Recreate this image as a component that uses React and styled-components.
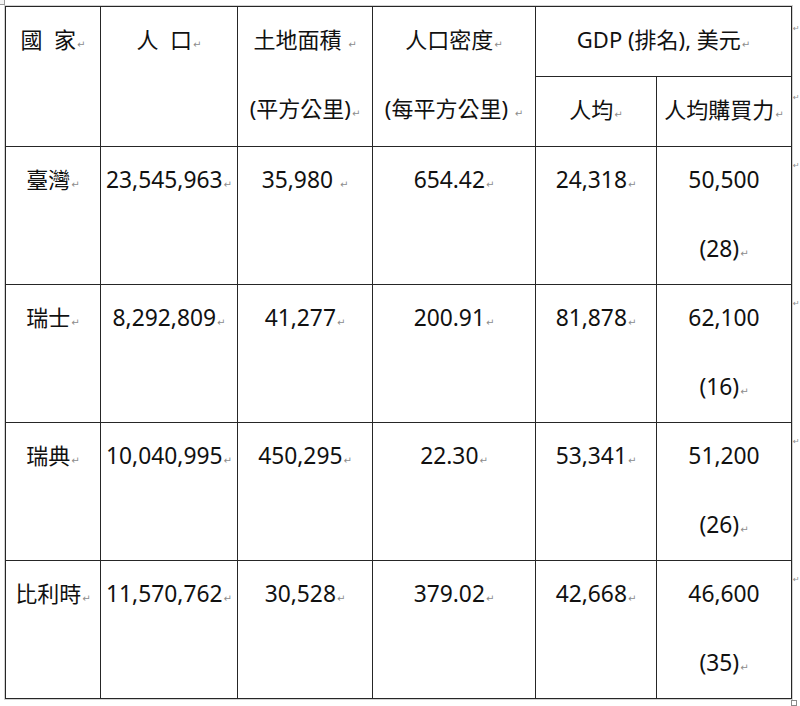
import React from "react";
import styled, { createGlobalStyle } from "styled-components";

const GlobalStyle = createGlobalStyle`
  html, body {
    margin: 0;
    padding: 0;
    background: #ffffff;
  }
  body {
    font-family: "Noto Sans", "Noto Sans CJK TC", sans-serif;
    color: #111;
  }
`;

const Page = styled.div`
  position: relative;
  display: flex;
  align-items: flex-start;
  padding: 6px 0 0 5px;
  width: 800px;
  height: 706px;
  box-sizing: border-box;
  overflow: hidden;
`;

const MoveHandle = styled.div`
  position: absolute;
  left: -1px;
  top: -1px;
  width: 4px;
  height: 4px;
  border: 1px solid #9a9a9a;
  background: #f4f4f4;
`;

const ResizeHandle = styled.div`
  position: absolute;
  left: 791px;
  top: 700px;
  width: 4px;
  height: 4px;
  border: 1px solid #8a8a8a;
  background: #fff;
`;

const Table = styled.table`
  border-collapse: collapse;
  table-layout: fixed;
  width: 786px;
  box-shadow: 0 0 0 1px #d2d2d2;
`;

const Cell = styled.td`
  border: 1px solid #262626;
  padding: 0;
  text-align: center;
  vertical-align: top;
  white-space: nowrap;
  font-size: 22px;
  height: ${(p) => p.$h}px;
`;

const Line = styled.div`
  height: ${(p) => p.$h}px;
  line-height: ${(p) => p.$h - 4}px;
`;

const Num = styled.span`
  font-size: 22.8px;
`;

const Mark = styled.span`
  font-family: "DejaVu Sans", sans-serif;
  font-size: 10px;
  color: #8c8c8c;
  margin-left: 1px;
`;

const RowMarks = styled.div`
  display: flex;
  flex-direction: column;
  padding-top: 1px;
`;

const MarkSlot = styled.div`
  height: ${(p) => p.$h}px;
  padding: ${(p) => p.$top}px 0 0 1px;
  box-sizing: border-box;
  font-family: "DejaVu Sans", sans-serif;
  font-size: 8px;
  color: #8c8c8c;
  line-height: 12px;
`;

const widths = [95, 137, 135, 163, 121, 135];

const rows = [
  ["臺灣", "23,545,963", "35,980 ", "654.42", "24,318", "50,500", "(28)"],
  ["瑞士", "8,292,809", "41,277", "200.91", "81,878", "62,100", "(16)"],
  ["瑞典", "10,040,995", "450,295", "22.30", "53,341", "51,200", "(26)"],
  ["比利時", "11,570,762", "30,528", "379.02", "42,668", "46,600", "(35)"],
];

const M = () => <Mark>↵</Mark>;

export default function App() {
  return (
    <>
      <GlobalStyle />
      <Page>
        <MoveHandle />
        <Table>
          <colgroup>
            {widths.map((w, i) => (
              <col key={i} style={{ width: w }} />
            ))}
          </colgroup>
          <tbody>
            <tr>
              <Cell rowSpan={2}>
                <Line $h={69}>國&nbsp;&nbsp;家<M /></Line>
              </Cell>
              <Cell rowSpan={2}>
                <Line $h={69}>人&nbsp;&nbsp;口<M /></Line>
              </Cell>
              <Cell rowSpan={2}>
                <Line $h={69}>土地面積 <M /></Line>
                <Line $h={69}>(平方公里)<M /></Line>
              </Cell>
              <Cell rowSpan={2}>
                <Line $h={69}>人口密度<M /></Line>
                <Line $h={69}>(每平方公里)&nbsp;<M /></Line>
              </Cell>
              <Cell colSpan={2} $h={69}>
                <Line $h={69}>GDP (排名), 美元<M /></Line>
              </Cell>
            </tr>
            <tr>
              <Cell $h={69}>
                <Line $h={69}>人均<M /></Line>
              </Cell>
              <Cell $h={69}>
                <Line $h={69}>人均購買力<M /></Line>
              </Cell>
            </tr>
            {rows.map((r) => (
              <tr key={r[0]}>
                <Cell $h={137}>
                  <Line $h={69}>{r[0]}<M /></Line>
                </Cell>
                {r.slice(1, 5).map((v, i) => (
                  <Cell key={i} $h={137}>
                    <Line $h={69}><Num>{v}</Num><M /></Line>
                  </Cell>
                ))}
                <Cell $h={137}>
                  <Line $h={69}><Num>{r[5]}</Num></Line>
                  <Line $h={68}><Num>{r[6]}</Num><M /></Line>
                </Cell>
              </tr>
            ))}
          </tbody>
        </Table>
        <RowMarks>
          <MarkSlot $h={70} $top={16}>↵</MarkSlot>
          <MarkSlot $h={70} $top={15}>↵</MarkSlot>
          {rows.map((r) => (
            <MarkSlot key={r[0]} $h={138} $top={13}>↵</MarkSlot>
          ))}
        </RowMarks>
        <ResizeHandle />
      </Page>
    </>
  );
}
